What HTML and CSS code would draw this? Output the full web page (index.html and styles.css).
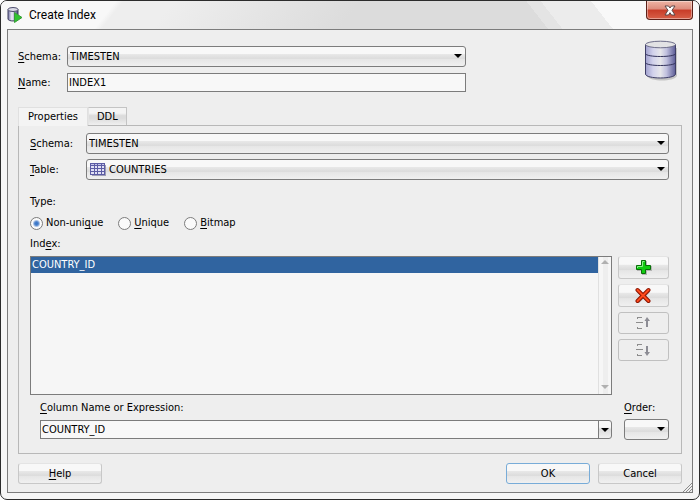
FILE: index.html
```html
<!DOCTYPE html>
<html lang="en">
<head>
  <meta charset="UTF-8">
  <meta name="viewport" content="width=device-width, initial-scale=1.0">
  <title>Create Index</title>
  <link rel="stylesheet" href="styles.css">
</head>
<body>
  <div class="window">
    <header class="titlebar">
      <svg class="app-icon" width="16" height="16" viewBox="0 0 16 16">
        <defs>
          <linearGradient id="can">
            <stop offset="0" stop-color="#7474a4"/>
            <stop offset="0.4" stop-color="#f0f0fa"/>
            <stop offset="1" stop-color="#44447c"/>
          </linearGradient>
        </defs>
        <path d="M1 2.500V12c0 2.600 10 2.600 10 0V2.500z" fill="url(#can)" stroke="#3c3c5c"/>
        <ellipse cx="6" cy="2.500" rx="5" ry="2" fill="#dcdce8" stroke="#4c4c6c"/>
        <path d="M7.500 5.500v10l7.500-5z" fill="#2fc62f" stroke="#3a9a3a"/>
      </svg>
      <h1>Create Index</h1>
      <button class="close" type="button" aria-label="Close">
        <svg width="12" height="11" viewBox="0 0 12 11">
          <path d="M1 1h3.500L6 3l1.500-2H11L8 5.300 11 10H7.500L6 7.700 4.500 10H1l3-4.700z" fill="#fff" stroke="#5c4848"/>
        </svg>
      </button>
    </header>

    <form class="content">
      <div class="top">
        <div class="fields">
          <label for="schema"><u>S</u>chema:</label>
          <div class="select">
            <select id="schema"><option>TIMESTEN</option></select>
          </div>
          <label for="name"><u>N</u>ame:</label>
          <input class="text" id="name" type="text" value="INDEX1">
        </div>
        <svg class="database" width="38" height="42" viewBox="0 0 38 42">
          <defs>
            <linearGradient id="body">
              <stop offset="0" stop-color="#a0a0ce"/>
              <stop offset="0.25" stop-color="#d2d2ec"/>
              <stop offset="0.5" stop-color="#e6e6ea"/>
              <stop offset="0.7" stop-color="#c0c0de"/>
              <stop offset="1" stop-color="#5c5c96"/>
            </linearGradient>
          </defs>
          <path d="M3 36c3 6 27 6 30 0V8h-2z" fill="#c4c4c4"/>
          <path d="M1.500 4.500V34c0 5.300 30 5.300 30 0V4.500z" fill="url(#body)" stroke="#3e3e66"/>
          <ellipse cx="16.500" cy="4.500" rx="15" ry="3.300" fill="#e2e2e4" stroke="#6c6c88"/>
          <path d="M1.500 13.500c0 4 30 4 30 0M1.500 22.500c0 4 30 4 30 0" fill="none" stroke="#34345c"/>
        </svg>
      </div>

      <div class="tabs" role="tablist">
        <button class="tab active" type="button" role="tab" aria-selected="true">Properties</button>
        <button class="tab" type="button" role="tab" aria-selected="false">DDL</button>
      </div>

      <section class="panel" role="tabpanel">
        <div class="fields">
          <label for="table-schema"><u>S</u>chema:</label>
          <div class="select">
            <select id="table-schema"><option>TIMESTEN</option></select>
          </div>
          <label for="table"><u>T</u>able:</label>
          <div class="select with-icon">
            <svg class="table-icon" width="16" height="13" viewBox="0 0 16 13">
              <path d="M2 2h14v11H2z" fill="#9c9cb4"/>
              <path d="M0 0h15v12H0z" fill="#5c5ca4"/>
              <path d="M1 1h3v1H1zM5 1h2v1H5zM8 1h3v1H8zM12 1h2v1h-2z" fill="#c4c4ea"/>
              <path d="M1 3h3v2H1zM5 3h2v2H5zM8 3h3v2H8zM12 3h2v2h-2zM1 6h3v2H1zM5 6h2v2H5zM8 6h3v2H8zM12 6h2v2h-2zM1 9h3v2H1zM5 9h2v2H5zM8 9h3v2H8zM12 9h2v2h-2z" fill="#e0e0f4"/>
            </svg>
            <select id="table"><option>COUNTRIES</option></select>
          </div>
        </div>

        <fieldset class="type">
          <legend>Type:</legend>
          <div class="radios">
            <label><input type="radio" name="type" checked> Non-uni<u>q</u>ue</label>
            <label><input type="radio" name="type"> <u>U</u>nique</label>
            <label><input type="radio" name="type"> <u>B</u>itmap</label>
          </div>
        </fieldset>

        <span class="list-label" id="index-label">Ind<u>e</u>x:</span>
        <div class="index">
          <div class="list">
            <ul role="listbox" aria-labelledby="index-label">
              <li role="option" aria-selected="true">COUNTRY_ID</li>
            </ul>
            <div class="scrollbar"></div>
          </div>
          <div class="actions">
            <button class="button" type="button" aria-label="Add">
              <svg width="18" height="17" viewBox="0 0 18 17">
                <path d="M7 2h5v5h5v5h-5v4H7v-4H2V7h5z" fill="#b4b4b4"/>
                <path d="M6.500 1.500h4v5h5v4h-5v4h-4v-4h-5v-4h5z" fill="#12cc12" stroke="#087008"/>
                <path d="M7.500 7.500v-5h2M2.500 9V7.500h5" fill="none" stroke="#8cf08c"/>
              </svg>
            </button>
            <button class="button" type="button" aria-label="Remove">
              <svg width="18" height="17" viewBox="0 0 18 17">
                <path d="M3 4l11 11M14 4L3 15" stroke="#b0b0b0" stroke-width="3"/>
                <path d="M2.500 3l11 11M13.500 3l-11 11" stroke="#8c1400" stroke-width="4" stroke-linecap="round"/>
                <path d="M2.500 3l11 11M13.500 3l-11 11" stroke="#ff4a1c" stroke-width="2" stroke-linecap="round"/>
              </svg>
            </button>
            <button class="button" type="button" aria-label="Move up" disabled>
              <svg width="18" height="15" viewBox="0 0 18 15">
                <path d="M2 1h5v1H3v1H2zM1 6h7v1H1zM2 11h1v1h4v1H2z" fill="#8c8c8c"/>
                <path d="M11 11V5H9.500L12 1l3 4h-2v6z" fill="#8c8c94"/>
              </svg>
            </button>
            <button class="button" type="button" aria-label="Move down" disabled>
              <svg width="18" height="15" viewBox="0 0 18 15">
                <path d="M2 1h5v1H3v1H2zM1 6h7v1H1zM2 11h1v1h4v1H2z" fill="#8c8c8c"/>
                <path d="M11 3v6H9.500l2.500 4 3-4h-2V3z" fill="#8c8c94"/>
              </svg>
            </button>
          </div>
        </div>

        <div class="column">
          <div class="expression">
            <label for="expression"><u>C</u>olumn Name or Expression:</label>
            <div class="combo">
              <input class="text" id="expression" type="text" value="COUNTRY_ID">
              <button type="button" aria-label="Show columns"></button>
            </div>
          </div>
          <div class="order">
            <label for="order"><u>O</u>rder:</label>
            <div class="select">
              <select id="order"><option></option></select>
            </div>
          </div>
        </div>
      </section>

      <footer class="footer">
        <button class="button help" type="button"><u>H</u>elp</button>
        <button class="button default" type="button">OK</button>
        <button class="button" type="button">Cancel</button>
      </footer>
      <svg class="grip" width="9" height="9" viewBox="0 0 9 9">
        <path d="M0 9l9-9M3 9l6-6M6 9l3-3" stroke="#8c8c8c"/>
      </svg>
    </form>
  </div>
</body>
</html>
```
FILE: styles.css
```css
* {
  box-sizing: border-box;
}
body {
  margin: 0;
  background: #fff;
  color: #000;
  font: 11px/14px "DejaVu Sans Condensed", "DejaVu Sans", sans-serif;
}
button, input, select {
  margin: 0;
  font: inherit;
  color: inherit;
}
svg {
  display: block;
  flex: none;
}
u {
  text-underline-offset: 2px;
}
.window {
  display: flex;
  flex-direction: column;
  min-height: 100vh;
  padding: 0 6px 6px;
  border: 1px solid #2c2c2c;
  border-radius: 7px;
  background: #f6f6f6;
}
.titlebar {
  display: flex;
  align-items: center;
  height: 28px;
  margin: 0 -6px;
  padding: 0 6px;
  border-radius: 6px 6px 0 0;
  background:
    linear-gradient(52deg, transparent 76%, #e4e4e4 76%, #e4e4e4 78%, #ececec 78%, #ececec 85%, #f8f8f8 85%),
    linear-gradient(128deg, #f8f8f8 16%, #eee 17%, #eee 24%, #dcdcdc 50%);
}
.titlebar h1 {
  flex: 1;
  margin: 0 0 0 6px;
  font: 12px/16px Roboto, "Open Sans", sans-serif;
}
.close {
  display: grid;
  place-items: center;
  align-self: flex-start;
  width: 47px;
  height: 19px;
  padding: 0;
  border: 1px solid #5c2018;
  border-top: 0;
  border-radius: 0 0 4px 4px;
  background: linear-gradient(#eeb4a4, #dc8c7c 45%, #c83c28 50%, #d86048);
  box-shadow: inset 0 0 0 1px rgba(255, 255, 255, 0.4);
}
.content {
  position: relative;
  display: flex;
  flex: 1;
  flex-direction: column;
  padding: 10px;
  padding-bottom: 8px;
  border: 1px solid #7c7c7c;
  background: #eee;
}
.top {
  display: flex;
  justify-content: space-between;
  padding-top: 6px;
}
.top .fields {
  width: 448px;
  grid-template-columns: 49px 1fr;
  row-gap: 6px;
}
.database {
  margin-top: -6px;
}
.fields {
  display: grid;
  grid-template-columns: 56px 1fr;
  gap: 5px 0;
  align-items: center;
}
.select {
  position: relative;
}
.select select {
  display: block;
  width: 100%;
  height: 21px;
  padding: 1px 20px 0 2px;
  border: 1px solid #7c7c7c;
  border-radius: 3px;
  background: linear-gradient(#f8f8f8 35%, #e8e8e8 38%, #dcdcdc 60%, #e6e6e6 65%, #f0f0f0);
  appearance: none;
}
.select::after, .combo button::after {
  content: "";
  position: absolute;
  top: 8px;
  right: 4px;
  border: 4px solid transparent;
  border-top: 4px solid #000;
  border-bottom: 0;
  pointer-events: none;
}
.with-icon select {
  padding-left: 22px;
}
.table-icon {
  position: absolute;
  top: 4px;
  left: 4px;
}
.text {
  width: 100%;
  height: 19px;
  padding: 0 1px;
  border: 1px solid #7c7c7c;
  border-radius: 0;
  background: #f8f8f8;
}
.tabs {
  display: flex;
  margin-top: 15px;
}
.tab {
  height: 18px;
  padding: 0 8px;
  border: 1px solid #c4c4c4;
  border-left-color: #e4e4e4;
  border-width: 1px 1px 0 1px;
  background: linear-gradient(#f4f4f4 30%, #dcdcdc 45%, #dcdcdc 60%, #f0f0f0);
}
.tab.active {
  position: relative;
  height: 19px;
  margin-bottom: -1px;
  padding: 0 9px;
  border-color: #e0e0e0;
  background: #f4f4f4;
}
.panel {
  display: flex;
  flex: 1;
  flex-direction: column;
  padding: 7px 12px 13px 11px;
  border: 1px solid #b8b8b8;
}
.type {
  margin: 15px 0 0;
  padding: 0;
  border: 0;
}
.type legend {
  padding: 0;
}
.radios {
  display: flex;
  gap: 15px;
  margin-top: 7px;
}
.radios label {
  display: flex;
  align-items: center;
}
.radios input {
  width: 13px;
  height: 13px;
  margin-right: 3px;
  border: 1px solid #7c7c7c;
  border-radius: 50%;
  background: #fafafa;
  appearance: none;
}
.radios input:checked {
  background: radial-gradient(circle, #3c78c8 1px, #5c8cd0 2px, #fafafa 4px);
}
.list-label {
  margin-top: 7px;
}
.index {
  display: flex;
  flex: 1;
  gap: 6px;
  margin-top: 5px;
}
.list {
  display: flex;
  flex: 1;
  border: 1px solid #7c7c7c;
  background: #f6f6f6;
}
.list ul {
  flex: 1;
  margin: 0;
  padding: 0;
  list-style: none;
}
.list li {
  padding: 1px;
  background: #3064a0;
  color: #fff;
}
.scrollbar {
  display: flex;
  flex-direction: column;
  align-items: center;
  justify-content: space-between;
  width: 13px;
  padding: 3px 0 5px;
  border-left: 1px solid #e0e0e0;
  background: linear-gradient(to right, #f6f6f6 4px, #eee 4px, #eee 9px, #f6f6f6 9px);
}
.scrollbar::before, .scrollbar::after {
  content: "";
  border: 4px solid transparent;
}
.scrollbar::before {
  border-top: 0;
  border-bottom-color: #b0b0b0;
}
.scrollbar::after {
  border-bottom: 0;
  border-top-color: #b0b0b0;
}
.actions {
  display: flex;
  flex-direction: column;
  gap: 5px;
  width: 51px;
}
.button {
  display: grid;
  grid-auto-flow: column;
  place-content: center;
  width: 84px;
  height: 21px;
  padding: 0;
  border: 1px solid #c8c8c8;
  border-top-color: #e4e4e4;
  border-radius: 3px;
  background: linear-gradient(#f8f8f8 35%, #e8e8e8 38%, #dcdcdc 60%, #e6e6e6 65%, #f0f0f0);
}
.actions .button {
  width: 100%;
  height: 23px;
}
.actions .button:disabled {
  height: 22px;
  border-color: #c0c0c0;
  background: #eee;
}
.column {
  display: flex;
  gap: 12px;
  margin-top: 6px;
  padding-left: 10px;
}
.expression {
  flex: 1;
}
.expression label, .order label {
  display: block;
  margin-bottom: 4px;
}
.combo {
  display: flex;
  padding-top: 1px;
}
.combo button {
  position: relative;
  width: 14px;
  height: 19px;
  margin-left: -1px;
  padding: 0;
  border: 1px solid #7c7c7c;
  border-radius: 0 3px 3px 0;
  background: linear-gradient(#f8f8f8 35%, #dcdcdc 50%, #f0f0f0);
}
.combo button::after {
  top: 7px;
  right: 2px;
}
.combo .text {
  flex: 1;
}
.order {
  width: 45px;
}
.footer {
  display: flex;
  gap: 8px;
  margin-top: 9px;
}
.footer .help {
  margin-right: auto;
}
.button.default {
  border-color: #78acd8;
}
.grip {
  position: absolute;
  right: 0;
  bottom: 0;
}
```
